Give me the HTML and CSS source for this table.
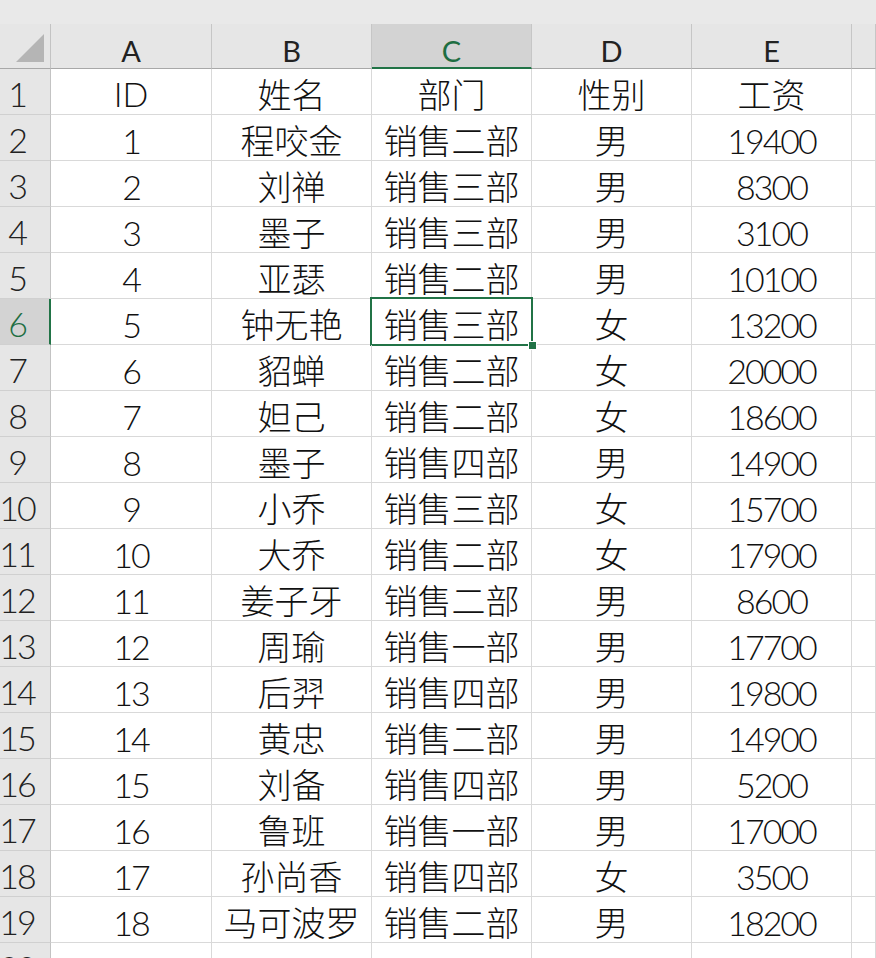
FILE: index.html
```html
<!DOCTYPE html>
<html lang="zh-CN">
<head>
<meta charset="utf-8">
<title>Sheet</title>
<link rel="stylesheet" href="styles.css">
</head>
<body>
<div class="topbar"></div>
<div class="sheet">
  <div class="corner"><svg class="tri" width="28" height="28" viewBox="0 0 28 28"><polygon points="28,0 28,28 0,28" fill="#b5b5b5"/></svg></div>
  <div class="ch">A</div><div class="ch">B</div><div class="ch sel">C</div><div class="ch">D</div><div class="ch">E</div><div class="ch"></div>

  <div class="rh">1</div><div class="c">ID</div><div class="c">姓名</div><div class="c">部门</div><div class="c">性别</div><div class="c">工资</div><div class="c"></div>
  <div class="rh">2</div><div class="c num">1</div><div class="c">程咬金</div><div class="c">销售二部</div><div class="c">男</div><div class="c num">19400</div><div class="c"></div>
  <div class="rh">3</div><div class="c num">2</div><div class="c">刘禅</div><div class="c">销售三部</div><div class="c">男</div><div class="c num">8300</div><div class="c"></div>
  <div class="rh">4</div><div class="c num">3</div><div class="c">墨子</div><div class="c">销售三部</div><div class="c">男</div><div class="c num">3100</div><div class="c"></div>
  <div class="rh">5</div><div class="c num">4</div><div class="c">亚瑟</div><div class="c">销售二部</div><div class="c">男</div><div class="c num">10100</div><div class="c"></div>
  <div class="rh sel">6</div><div class="c num">5</div><div class="c">钟无艳</div><div class="c active">销售三部</div><div class="c">女</div><div class="c num">13200</div><div class="c"></div>
  <div class="rh">7</div><div class="c num">6</div><div class="c">貂蝉</div><div class="c">销售二部</div><div class="c">女</div><div class="c num">20000</div><div class="c"></div>
  <div class="rh">8</div><div class="c num">7</div><div class="c">妲己</div><div class="c">销售二部</div><div class="c">女</div><div class="c num">18600</div><div class="c"></div>
  <div class="rh">9</div><div class="c num">8</div><div class="c">墨子</div><div class="c">销售四部</div><div class="c">男</div><div class="c num">14900</div><div class="c"></div>
  <div class="rh">10</div><div class="c num">9</div><div class="c">小乔</div><div class="c">销售三部</div><div class="c">女</div><div class="c num">15700</div><div class="c"></div>
  <div class="rh">11</div><div class="c num">10</div><div class="c">大乔</div><div class="c">销售二部</div><div class="c">女</div><div class="c num">17900</div><div class="c"></div>
  <div class="rh">12</div><div class="c num">11</div><div class="c">姜子牙</div><div class="c">销售二部</div><div class="c">男</div><div class="c num">8600</div><div class="c"></div>
  <div class="rh">13</div><div class="c num">12</div><div class="c">周瑜</div><div class="c">销售一部</div><div class="c">男</div><div class="c num">17700</div><div class="c"></div>
  <div class="rh">14</div><div class="c num">13</div><div class="c">后羿</div><div class="c">销售四部</div><div class="c">男</div><div class="c num">19800</div><div class="c"></div>
  <div class="rh">15</div><div class="c num">14</div><div class="c">黄忠</div><div class="c">销售二部</div><div class="c">男</div><div class="c num">14900</div><div class="c"></div>
  <div class="rh">16</div><div class="c num">15</div><div class="c">刘备</div><div class="c">销售四部</div><div class="c">男</div><div class="c num">5200</div><div class="c"></div>
  <div class="rh">17</div><div class="c num">16</div><div class="c">鲁班</div><div class="c">销售一部</div><div class="c">男</div><div class="c num">17000</div><div class="c"></div>
  <div class="rh">18</div><div class="c num">17</div><div class="c">孙尚香</div><div class="c">销售四部</div><div class="c">女</div><div class="c num">3500</div><div class="c"></div>
  <div class="rh">19</div><div class="c num">18</div><div class="c">马可波罗</div><div class="c">销售二部</div><div class="c">男</div><div class="c num">18200</div><div class="c"></div>
  <div class="rh">20</div><div class="c"></div><div class="c"></div><div class="c"></div><div class="c"></div><div class="c"></div><div class="c"></div>
</div>
</body>
</html>
```
FILE: styles.css
```css
html, body {
  margin: 0;
  padding: 0;
  background: #ffffff;
  overflow: hidden;
  width: 876px;
  height: 958px;
}

.topbar {
  height: 24px;
  background: #e9e9e9;
}

.sheet {
  display: grid;
  grid-template-columns: 51px 161px 160px 160px 160px 160px 1fr;
  grid-template-rows: 45px;
  grid-auto-rows: 46px;
  font-family: Lato, "Noto Sans CJK SC", sans-serif;
  font-weight: 300;
  color: #111111;
}

.sheet > div {
  box-sizing: border-box;
  display: flex;
  align-items: center;
  justify-content: center;
  white-space: nowrap;
}

.corner {
  background: #e6e6e6;
  border-right: 1px solid #c3c3c3;
  border-bottom: 1px solid #a8a8a8;
  align-items: flex-end !important;
  justify-content: flex-end !important;
  padding: 0 6px 6px 0;
}

.tri {
  display: block;
}

.ch {
  background: #e6e6e6;
  border-right: 1px solid #c6c6c6;
  border-bottom: 1px solid #a8a8a8;
  font-size: 29px;
  font-weight: 400;
  color: #222222;
  padding-top: 8px;
}

.ch.sel {
  background: #d3d3d3;
  color: #1e6e42;
  border-bottom: 2px solid #217346;
  padding-top: 9px;
}

.rh {
  background: #e6e6e6;
  border-right: 1px solid #c3c3c3;
  border-bottom: 1px solid #d0d0d0;
  font-size: 34px;
  letter-spacing: -2px;
  color: #222222;
  padding: 4px 16px 0 0;
}

.rh.sel {
  background: #d3d3d3;
  color: #1e6e42;
  border-right: 2px solid #217346;
  padding-right: 15px;
}

.c {
  border-right: 1px solid #d9d9d9;
  border-bottom: 1px solid #d9d9d9;
  font-size: 34px;
  padding-top: 3px;
  position: relative;
}

.num {
  letter-spacing: -2px;
  padding-top: 5px;
}

.active::after {
  content: "";
  position: absolute;
  top: -2px;
  left: -2px;
  right: -2px;
  bottom: -2px;
  border: 2px solid #217346;
}

.active::before {
  content: "";
  position: absolute;
  right: -6px;
  bottom: -6px;
  width: 7px;
  height: 7px;
  background: #217346;
  border: 1px solid #ffffff;
  z-index: 2;
}
```
